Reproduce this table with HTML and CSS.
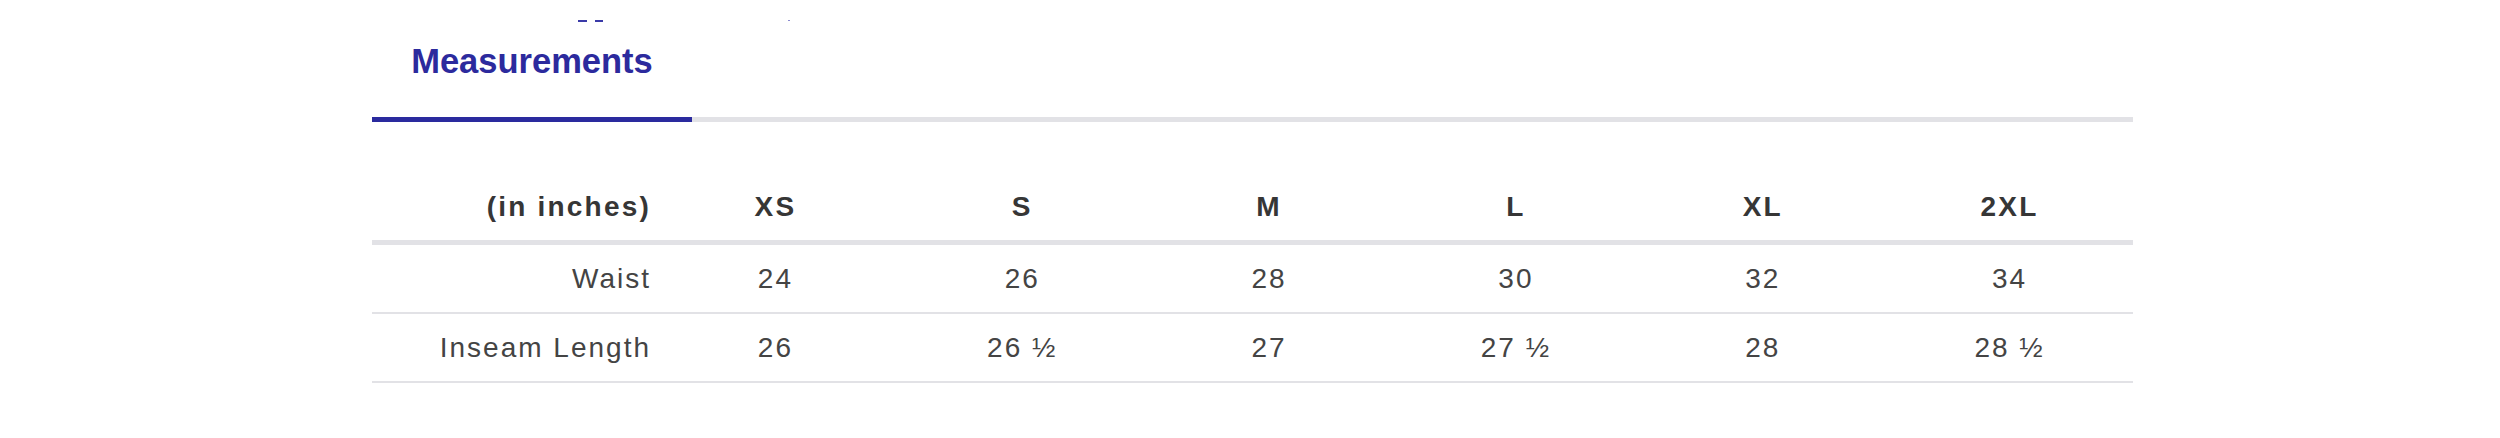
FILE: index.html
```html
<!DOCTYPE html>
<html lang="en">
<head>
<meta charset="utf-8">
<title>Measurements</title>
<link rel="stylesheet" href="styles.css">
</head>
<body>
<div class="page">
  <div class="cutoff" aria-hidden="true">
    <span class="mark mark-a"></span>
    <span class="mark mark-b"></span>
    <span class="mark mark-c"></span>
  </div>
  <div class="tabbar">
    <div class="tab active">Measurements</div>
  </div>
  <div class="sizes">
    <div class="row head">
      <div class="cell label">(in inches)</div>
      <div class="cell">XS</div>
      <div class="cell">S</div>
      <div class="cell">M</div>
      <div class="cell">L</div>
      <div class="cell">XL</div>
      <div class="cell">2XL</div>
    </div>
    <div class="row">
      <div class="cell label">Waist</div>
      <div class="cell">24</div>
      <div class="cell">26</div>
      <div class="cell">28</div>
      <div class="cell">30</div>
      <div class="cell">32</div>
      <div class="cell">34</div>
    </div>
    <div class="row">
      <div class="cell label">Inseam Length</div>
      <div class="cell">26</div>
      <div class="cell">26 ½</div>
      <div class="cell">27</div>
      <div class="cell">27 ½</div>
      <div class="cell">28</div>
      <div class="cell">28 ½</div>
    </div>
  </div>
</div>
</body>
</html>
```
FILE: styles.css
```css
html, body {
  margin: 0;
  padding: 0;
  background: #ffffff;
}

body {
  font-family: "Liberation Sans", Arial, Helvetica, sans-serif;
}

.page {
  width: 1761px;
  margin-left: 372px;
}

.cutoff {
  height: 23px;
  display: flex;
  align-items: flex-start;
  padding-top: 20px;
  box-sizing: border-box;
}

.mark {
  display: block;
  height: 2px;
  background: #3a3aa8;
}

.mark-a {
  width: 9px;
  margin-left: 206px;
}

.mark-b {
  width: 8px;
  margin-left: 8px;
}

.mark-c {
  width: 2px;
  height: 1px;
  margin-left: 185px;
  background: #8a8ad0;
}

.tabbar {
  display: flex;
  border-bottom: 5px solid #e2e2e6;
}

.tab {
  width: 320px;
  text-align: center;
  padding: 18px 0 36px;
  margin-bottom: -5px;
  font-size: 34.5px;
  line-height: 40px;
  font-weight: 700;
  color: #2c2a9d;
}

.tab.active {
  border-bottom: 5px solid #2a2a9e;
}

.sizes {
  margin-top: 51px;
}

.row {
  display: grid;
  grid-template-columns: 280px repeat(6, 1fr);
  align-items: center;
  height: 67px;
  border-bottom: 2px solid #e2e2e6;
  font-size: 28px;
  letter-spacing: 2px;
  color: #444444;
}

.row.head {
  border-bottom-width: 5px;
  font-weight: 700;
  color: #363636;
  letter-spacing: 2.2px;
}

.cell {
  text-align: center;
  white-space: nowrap;
}

.cell.label {
  text-align: right;
  padding-right: 1px;
}
```
